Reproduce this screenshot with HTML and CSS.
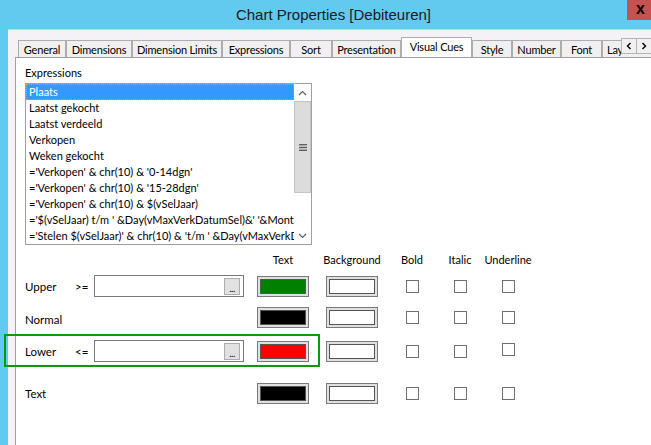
FILE: index.html
```html
<!DOCTYPE html>
<html>
<head>
<meta charset="utf-8">
<title>Chart Properties [Debiteuren]</title>
<link rel="stylesheet" href="styles.css">
</head>
<body>
<div class="window">
  <div class="titlebar">
    <span class="title">Chart Properties [Debiteuren]</span>
    <div class="close">x</div>
  </div>
  <div class="frame">
    <div class="frame-edge"></div>
    <div class="client">
      <div class="tabstrip">
        <div class="tab tab-general">General</div>
        <div class="tab tab-dimensions">Dimensions</div>
        <div class="tab tab-limits">Dimension Limits</div>
        <div class="tab tab-expressions">Expressions</div>
        <div class="tab tab-sort">Sort</div>
        <div class="tab tab-presentation">Presentation</div>
        <div class="tab tab-active">Visual Cues</div>
        <div class="tab tab-style">Style</div>
        <div class="tab tab-number">Number</div>
        <div class="tab tab-font">Font</div>
        <div class="tab tab-layout">Layout</div>
        <div class="tab-scroll">
          <div class="scroll-btn">
            <svg width="6" height="8" viewBox="0 0 6 8"><polyline points="4.5,1 1.5,4 4.5,7" fill="none" stroke="#000" stroke-width="1.4"/></svg>
          </div>
          <div class="scroll-btn">
            <svg width="6" height="8" viewBox="0 0 6 8"><polyline points="1.5,1 4.5,4 1.5,7" fill="none" stroke="#000" stroke-width="1.4"/></svg>
          </div>
        </div>
      </div>
      <div class="panel">
        <div class="field-label">Expressions</div>
        <div class="listbox">
          <div class="list-items">
            <div class="item item-selected">Plaats</div>
            <div class="item">Laatst gekocht</div>
            <div class="item">Laatst verdeeld</div>
            <div class="item">Verkopen</div>
            <div class="item">Weken gekocht</div>
            <div class="item">='Verkopen' &amp; chr(10) &amp; '0-14dgn'</div>
            <div class="item">='Verkopen' &amp; chr(10) &amp; '15-28dgn'</div>
            <div class="item">='Verkopen' &amp; chr(10) &amp; $(vSelJaar)</div>
            <div class="item">='$(vSelJaar) t/m ' &amp;Day(vMaxVerkDatumSel)&amp;' '&amp;Month(</div>
            <div class="item">='Stelen $(vSelJaar)' &amp; chr(10) &amp;  't/m ' &amp;Day(vMaxVerkD</div>
          </div>
          <div class="scrollbar">
            <div class="sb-arrow">
              <svg width="9" height="6" viewBox="0 0 9 6"><polyline points="1,5 4.5,1.5 8,5" fill="none" stroke="#606060" stroke-width="1.2"/></svg>
            </div>
            <div class="sb-thumb">
              <svg width="8" height="7" viewBox="0 0 8 7"><rect x="0" y="0" width="8" height="1.4" fill="#606060"/><rect x="0" y="2.8" width="8" height="1.4" fill="#606060"/><rect x="0" y="5.6" width="8" height="1.4" fill="#606060"/></svg>
            </div>
            <div class="sb-track"></div>
            <div class="sb-arrow">
              <svg width="9" height="6" viewBox="0 0 9 6"><polyline points="1,1 4.5,4.5 8,1" fill="none" stroke="#606060" stroke-width="1.2"/></svg>
            </div>
          </div>
        </div>

        <div class="cues">
          <div class="cue-head">
            <div class="head-spacer"></div>
            <div class="col-swatch">Text</div>
            <div class="col-swatch col-bg">Background</div>
            <div class="col-check col-first">Bold</div>
            <div class="col-check">Italic</div>
            <div class="col-check">Underline</div>
          </div>

          <div class="cue-row row-upper">
            <div class="cue-label">Upper</div>
            <div class="cue-op">&gt;=</div>
            <div class="cue-input"><div class="dots-btn">...</div></div>
            <div class="col-swatch"><div class="swatch"><div class="swatch-fill fill-green"></div></div></div>
            <div class="col-swatch col-bg"><div class="swatch"><div class="swatch-fill fill-white"></div></div></div>
            <div class="col-check col-first"><div class="checkbox"></div></div>
            <div class="col-check"><div class="checkbox"></div></div>
            <div class="col-check"><div class="checkbox"></div></div>
          </div>

          <div class="cue-row row-normal">
            <div class="cue-label label-normal">Normal</div>
            <div class="cue-op"></div>
            <div class="cue-input-empty"></div>
            <div class="col-swatch"><div class="swatch"><div class="swatch-fill fill-black"></div></div></div>
            <div class="col-swatch col-bg"><div class="swatch"><div class="swatch-fill fill-white"></div></div></div>
            <div class="col-check col-first"><div class="checkbox"></div></div>
            <div class="col-check"><div class="checkbox"></div></div>
            <div class="col-check"><div class="checkbox"></div></div>
          </div>

          <div class="cue-row row-lower">
            <div class="cue-label">Lower</div>
            <div class="cue-op">&lt;=</div>
            <div class="cue-input"><div class="dots-btn">...</div></div>
            <div class="col-swatch"><div class="swatch"><div class="swatch-fill fill-red"></div></div></div>
            <div class="col-swatch col-bg"><div class="swatch"><div class="swatch-fill fill-white"></div></div></div>
            <div class="col-check col-first"><div class="checkbox"></div></div>
            <div class="col-check"><div class="checkbox"></div></div>
            <div class="col-check"><div class="checkbox checkbox-raised"></div></div>
          </div>

          <div class="cue-row row-text">
            <div class="cue-label">Text</div>
            <div class="cue-op"></div>
            <div class="cue-input-empty"></div>
            <div class="col-swatch"><div class="swatch"><div class="swatch-fill fill-black"></div></div></div>
            <div class="col-swatch col-bg"><div class="swatch"><div class="swatch-fill fill-white"></div></div></div>
            <div class="col-check col-first"><div class="checkbox"></div></div>
            <div class="col-check"><div class="checkbox"></div></div>
            <div class="col-check"><div class="checkbox"></div></div>
          </div>
        </div>
      </div>
    </div>
  </div>
  <div class="highlight"></div>
</div>
</body>
</html>
```

FILE: styles.css
```css
* { box-sizing: border-box; }

body {
  margin: 0;
  font-family: Lato, "Liberation Sans", Arial, sans-serif;
  font-size: 11px;
  color: #000;
}

.window {
  position: relative;
  width: 651px;
  height: 445px;
  overflow: hidden;
  display: flex;
  flex-direction: column;
  background: #62c9ef;
}

/* Title bar */
.titlebar {
  height: 29px;
  flex: none;
  display: flex;
  align-items: center;
  justify-content: center;
  padding-left: 16px;
}
.title {
  font-family: "Liberation Sans", Arial, sans-serif;
  font-size: 15px;
  color: #1b1b1b;
}
.close {
  position: absolute;
  top: 0;
  right: 0;
  width: 24px;
  height: 20px;
  background: #c75050;
  padding-left: 9px;
  font-family: "Liberation Sans", Arial, sans-serif;
  font-weight: bold;
  font-size: 16px;
  line-height: 17px;
  color: #000;
}

/* Frame */
.frame {
  flex: 1;
  display: flex;
}
.frame-edge {
  width: 8px;
  flex: none;
  background: #62c9ef;
}
.client {
  flex: 1;
  background: #f4f2f6;
  border-top: 1px solid #cfcfd4;
  padding: 7px 0 0 7px;
  display: flex;
  flex-direction: column;
}

/* Tabs */
.tabstrip {
  position: relative;
  height: 20px;
  flex: none;
  display: flex;
  align-items: flex-end;
  padding-left: 3px;
  overflow: hidden;
}
.tab {
  flex: none;
  height: 17px;
  background: #f0f0f0;
  border: 1px solid #adadad;
  border-bottom: none;
  display: flex;
  align-items: center;
  justify-content: center;
  white-space: nowrap;
  overflow: hidden;
  font-size: 11px;
  letter-spacing: -0.2px;
  color: #000;
}
.tab-general { width: 48px; }
.tab-dimensions { width: 66px; }
.tab-limits { width: 90px; }
.tab-expressions { width: 68px; }
.tab-sort { width: 42px; }
.tab-presentation { width: 69px; }
.tab-active {
  width: 71px;
  height: 21px;
  margin-bottom: -1px;
  background: #fff;
  padding-bottom: 3px;
  position: relative;
  z-index: 1;
}
.tab-style { width: 40px; }
.tab-number { width: 49px; }
.tab-font { width: 41px; }
.tab-layout { width: 50px; justify-content: flex-start; padding-left: 4px; }

.tab-scroll {
  position: absolute;
  right: 0;
  top: 1px;
  display: flex;
  z-index: 2;
}
.scroll-btn {
  width: 16px;
  height: 16px;
  background: #f0f0f0;
  border: 1px solid #b4b4b4;
  display: flex;
  align-items: center;
  justify-content: center;
}
.scroll-btn + .scroll-btn { margin-left: -1px; }

/* Panel */
.panel {
  flex: 1;
  background: #fff;
  border-left: 1px solid #a0a0a0;
  border-top: 1px solid #a0a0a0;
  padding: 8px 0 0 9px;
}
.field-label {
  height: 14px;
  line-height: 14px;
  font-size: 11px;
}

/* List box */
.listbox {
  margin-top: 3px;
  width: 287px;
  height: 162px;
  border: 1px solid #a0a0a0;
  display: flex;
}
.list-items {
  flex: 1;
  overflow: hidden;
}
.item {
  height: 16px;
  line-height: 16px;
  padding-left: 3px;
  white-space: nowrap;
  overflow: hidden;
  font-size: 11px;
}
.item-selected {
  background: #3399ff;
  color: #fff;
  outline: 1px dotted #e59a2f;
  outline-offset: -1px;
}
.scrollbar {
  width: 17px;
  flex: none;
  display: flex;
  flex-direction: column;
}
.sb-arrow {
  height: 17px;
  display: flex;
  align-items: center;
  justify-content: center;
}
.sb-thumb {
  height: 92px;
  background: #dcdcdc;
  border: 1px solid #c4c4c4;
  display: flex;
  align-items: center;
  justify-content: center;
}
.sb-track { flex: 1; }

/* Visual cues */
.cues {
  margin-top: 6px;
}
.cue-head {
  height: 16px;
  display: flex;
  align-items: center;
  font-size: 11px;
}
.head-spacer { width: 219px; flex: none; }

.cue-row {
  height: 24px;
  display: flex;
  align-items: center;
}
.row-upper { margin-top: 7px; }
.row-normal { margin-top: 7px; }
.row-lower { margin-top: 10px; }
.row-text { margin-top: 18px; }

.cue-label {
  width: 50px;
  flex: none;
  font-size: 11.5px;
}
.label-normal { padding-top: 5px; }
.cue-op {
  width: 19px;
  flex: none;
  font-size: 11.5px;
}
.cue-input {
  width: 150px;
  height: 22px;
  flex: none;
  border: 1px solid #7a7a7a;
  background: #fff;
  display: flex;
  align-items: center;
  justify-content: flex-end;
  padding-right: 3px;
}
.cue-input-empty {
  width: 150px;
  flex: none;
}
.dots-btn {
  width: 16px;
  height: 17px;
  background: #e1e1e1;
  border: 1px solid #adadad;
  font-size: 10px;
  line-height: 18px;
  text-align: center;
  letter-spacing: -0.5px;
}

.col-swatch {
  width: 52px;
  flex: none;
  margin-left: 13px;
  display: flex;
  justify-content: center;
  white-space: nowrap;
}
.col-bg { margin-left: 17px; }
.col-check {
  width: 48px;
  flex: none;
  display: flex;
  justify-content: center;
  white-space: nowrap;
}
.col-first { margin-left: 10px; }

.swatch {
  width: 52px;
  height: 21px;
  border: 1px solid #7a7a7a;
  background: #e0e0e0;
  padding: 2px;
}
.swatch-fill {
  width: 100%;
  height: 100%;
  border: 1px solid #555;
}
.fill-green { background: #008000; }
.fill-black { background: #000; }
.fill-red { background: #ff0000; }
.fill-white { background: #fff; }

.checkbox {
  width: 13px;
  height: 13px;
  border: 1px solid #707070;
  background: #fff;
}
.checkbox-raised { margin-bottom: 4px; }

/* Annotation rectangle drawn over the dialog */
.highlight {
  position: absolute;
  left: 4px;
  top: 334px;
  width: 316px;
  height: 33px;
  border: 2px solid #0b9a0b;
  pointer-events: none;
}
```
